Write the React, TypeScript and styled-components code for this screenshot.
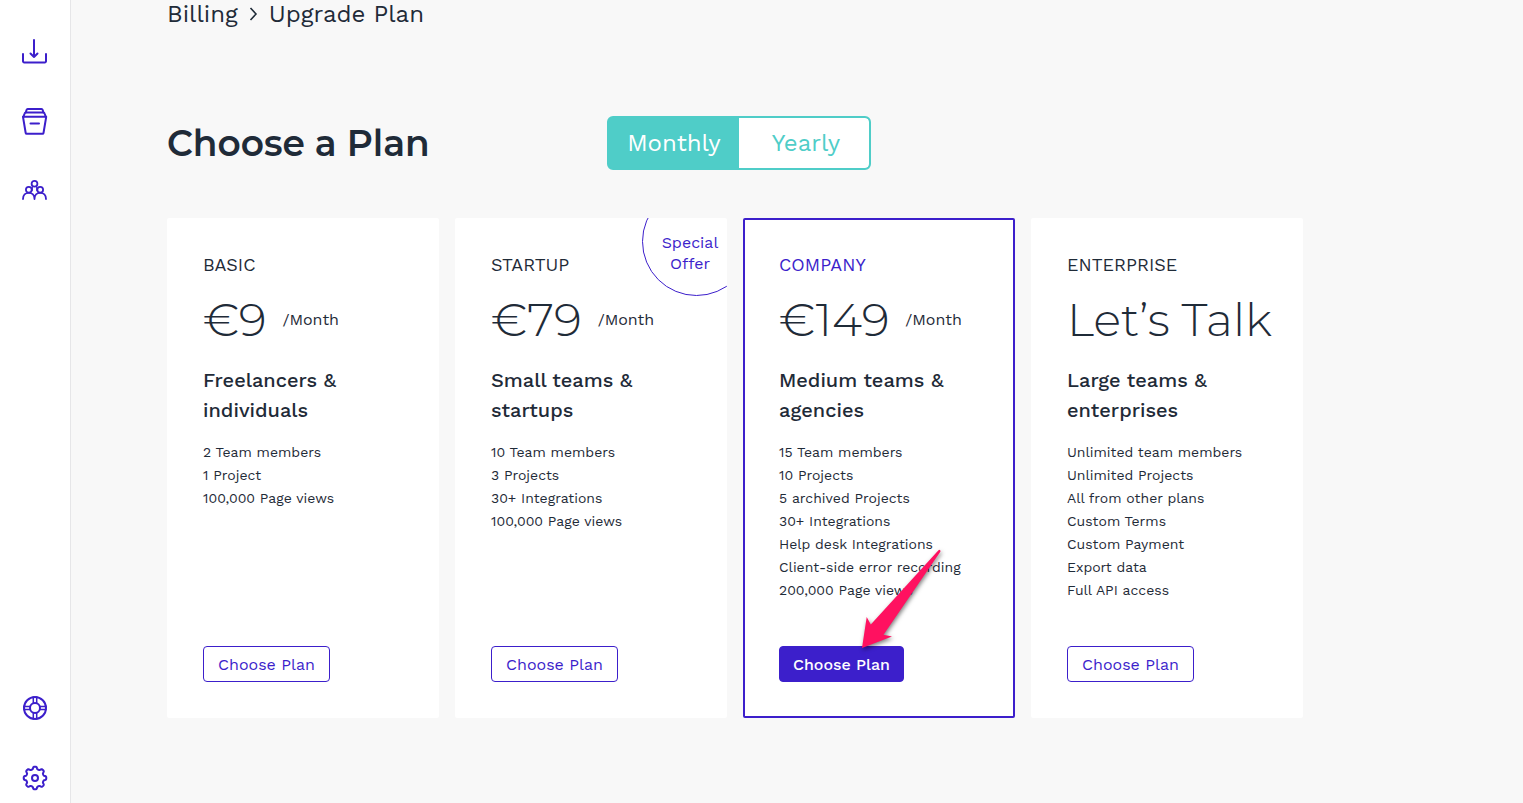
import React from "react";
import styled, { createGlobalStyle, css } from "styled-components";

const indigo = "#3c1fcb";
const ink = "#1f2b38";
const teal = "#4fcdc8";

const GlobalStyle = createGlobalStyle`
  *, *::before, *::after { box-sizing: border-box; }
  body {
    margin: 0;
    background: #f8f8f8;
    color: ${ink};
    font-family: "Work Sans", Inter, "Noto Sans", sans-serif;
    font-size: 14px;
  }
  button { font: inherit; cursor: pointer; }
  h1, h2, p, ul, ol { margin: 0; padding: 0; }
  ul, ol { list-style: none; }
`;

const Shell = styled.div`
  display: flex;
  min-height: 100vh;
`;

const Sidebar = styled.nav`
  position: sticky;
  top: 0;
  display: flex;
  flex: 0 0 71px;
  flex-direction: column;
  justify-content: space-between;
  height: 100vh;
  padding: 31px 0 5px;
  background: #fff;
  border-right: 1px solid #e6e6e8;
`;

const NavGroup = styled.div`
  display: flex;
  flex-direction: column;
  align-items: center;
  gap: 30px;
`;

const NavLink = styled.a`
  display: flex;
  align-items: center;
  justify-content: center;
  width: 40px;
  height: 40px;
  color: ${indigo};
`;

const IconSvg = styled.svg`
  display: block;
  width: 28px;
  height: 28px;
  fill: none;
  stroke: currentColor;
  stroke-width: 2;
  stroke-linecap: round;
  stroke-linejoin: round;
`;

const Main = styled.main`
  flex: 1;
  min-width: 0;
  padding: 0 96px 48px;
`;

const Content = styled.div`
  max-width: 1136px;
`;

const Breadcrumb = styled.ol`
  display: flex;
  align-items: center;
  gap: 11px;
  height: 28px;
  font-size: 24px;
  line-height: 28px;
`;

const CrumbLink = styled.a`
  color: inherit;
  text-decoration: none;
`;

const Chevron = styled.svg`
  display: block;
  width: 9px;
  height: 14px;
  fill: none;
  stroke: currentColor;
  stroke-width: 1.6;
`;

const PlanHeader = styled.header`
  display: grid;
  grid-template-columns: 440px auto;
  align-items: center;
  justify-content: start;
  margin: 88px 0 48px;
`;

const Heading = styled.h1`
  font-family: Montserrat, Inter, sans-serif;
  font-size: 36px;
  font-weight: 600;
  line-height: 54px;
`;

const Toggle = styled.div`
  display: grid;
  grid-template-columns: 1fr 1fr;
  width: 264px;
  height: 54px;
  overflow: hidden;
  background: ${teal};
  border: 2px solid ${teal};
  border-radius: 6px;
`;

const ToggleButton = styled.button<{ $active: boolean }>`
  padding: 0;
  border: 0;
  background: ${(p) => (p.$active ? teal : "#fff")};
  color: ${(p) => (p.$active ? "#fff" : teal)};
  font-size: 24px;

  &:last-child {
    padding-left: 4px;
    border-radius: 0 4px 4px 0;
  }
`;

const PlanGrid = styled.div`
  display: grid;
  grid-template-columns: repeat(4, minmax(0, 1fr));
  gap: 16px;
`;

const Card = styled.section<{ $featured?: boolean }>`
  position: relative;
  display: flex;
  flex-direction: column;
  align-items: flex-start;
  min-height: 500px;
  padding: 34px 0 34px 34px;
  background: #fff;
  border: 2px solid ${(p) => (p.$featured ? indigo : "#fff")};
  border-radius: 2px;
`;

const PlanName = styled.h2<{ $featured?: boolean }>`
  color: ${(p) => (p.$featured ? indigo : ink)};
  font-size: 18px;
  font-weight: 400;
  line-height: 22px;
  text-transform: uppercase;
`;

const PriceRow = styled.div`
  display: flex;
  align-items: center;
  gap: 16px;
  margin-top: 14px;
  white-space: nowrap;
`;

const Price = styled.span`
  font-family: Montserrat, Inter, sans-serif;
  font-size: 46px;
  font-weight: 300;
  line-height: 60px;
`;

const Period = styled.span`
  font-size: 16px;
  line-height: 20px;
`;

const Audience = styled.p`
  max-width: 180px;
  margin-top: 15px;
  font-size: 20px;
  font-weight: 500;
  line-height: 30px;
`;

const Features = styled.ul`
  margin-top: 16px;
  font-size: 14px;
  line-height: 23px;
  white-space: nowrap;
`;

const CardAction = styled.div`
  position: relative;
  margin-top: auto;
`;

const ChooseButton = styled.button<{ $featured?: boolean }>`
  display: block;
  width: 127px;
  height: 36px;
  padding: 0;
  border: 1px solid ${indigo};
  border-radius: 4px;
  background: #fff;
  color: ${indigo};
  font-size: 16px;
  ${(p) =>
    p.$featured &&
    css`
      width: 125px;
      background: ${indigo};
      color: #fff;
      font-weight: 500;
    `}
`;

const OfferClip = styled.div`
  position: absolute;
  inset: -2px;
  overflow: hidden;
  pointer-events: none;
`;

const Offer = styled.div`
  position: absolute;
  top: -31px;
  right: -24px;
  width: 109px;
  height: 109px;
  padding: 44px 13px 0 0;
  border: 1px solid ${indigo};
  border-radius: 50%;
  color: ${indigo};
  font-size: 16px;
  line-height: 21px;
  text-align: center;
`;

const Pointer = styled.svg`
  position: absolute;
  left: 76px;
  bottom: 24px;
  width: 96px;
  height: 114px;
  overflow: visible;
  pointer-events: none;
  filter: drop-shadow(1px 2px 2px rgba(0, 0, 0, 0.5));
`;

const gearPath = (() => {
  const steps = 160;
  const points = Array.from({ length: steps }, (_, i) => {
    const angle = (i / steps) * Math.PI * 2;
    const radius = 10.1 + 1.2 * Math.tanh(2.2 * Math.cos(8 * angle));
    return `${(14 + radius * Math.cos(angle)).toFixed(2)} ${(14 + radius * Math.sin(angle)).toFixed(2)}`;
  });
  return `M${points.join("L")}Z`;
})();

const DownloadIcon = () => (
  <IconSvg viewBox="0 0 28 28" aria-hidden="true">
    <path d="M2 17v7.2a1.2 1.2 0 0 0 1.2 1.2h20.6a1.2 1.2 0 0 0 1.2-1.2V17" />
    <path d="M13 3v17M9.5 16.5 13 20l3.5-3.5" />
  </IconSvg>
);

const ArchiveIcon = () => (
  <IconSvg viewBox="0 0 28 28" aria-hidden="true">
    <path d="M4.8 5.6 5.5 3c.2-.6.6-1 1.200-1h13.800c.6 0 1 .4 1.200 1l.7 2.600" />
    <path d="M2.400 9.800 3.600 6.500c.2-.6.600-.9 1.200-.9h17.600c.600 0 1 .3 1.200.9l1.200 3.300" />
    <path d="M2 9.800h23.200L22.500 26a1 1 0 0 1-1 .8H5.700a1 1 0 0 1-1-.8Z" />
    <path d="M9.500 16.500h8.500" />
  </IconSvg>
);

const TeamIcon = () => (
  <IconSvg viewBox="0 0 28 28" aria-hidden="true">
    <g strokeWidth="1.8">
      <circle cx="13.500" cy="6.800" r="2.900" />
      <circle cx="7.800" cy="12.800" r="2.900" />
      <circle cx="19.200" cy="12.800" r="2.900" />
      <path d="M2 22c0-3.800 2.400-6.200 5.800-6.200s5.700 2.400 5.700 6.200c0-3.800 2.300-6.200 5.700-6.200S25 18.200 25 22" />
      <path strokeWidth="1.200" d="M11.300 9.800v3.500M15.700 9.800v3.500" />
    </g>
  </IconSvg>
);

const HelpIcon = () => (
  <IconSvg viewBox="0 0 28 28" aria-hidden="true">
    <circle cx="14" cy="14" r="11" />
    <circle cx="14" cy="14" r="5" />
    <path
      strokeWidth="1.500"
      d="M12.300 3v6.200M15.700 3v6.200M12.300 18.800V25M15.700 18.800V25M3 12.600h6M3 15.400h6M19 12.600h6M19 15.400h6"
    />
  </IconSvg>
);

const SettingsIcon = () => (
  <IconSvg viewBox="0 0 28 28" aria-hidden="true">
    <path d={gearPath} />
    <circle cx="14" cy="14" r="3" />
  </IconSvg>
);

interface Plan {
  name: string;
  price: string;
  period?: string;
  audience: string;
  features: string[];
  featured?: boolean;
  offer?: boolean;
}

const plans: Plan[] = [
  {
    name: "Basic",
    price: "€9",
    period: "/Month",
    audience: "Freelancers & individuals",
    features: ["2 Team members", "1 Project", "100,000 Page views"],
  },
  {
    name: "Startup",
    price: "€79",
    period: "/Month",
    audience: "Small teams & startups",
    features: ["10 Team members", "3 Projects", "30+ Integrations", "100,000 Page views"],
    offer: true,
  },
  {
    name: "Company",
    price: "€149",
    period: "/Month",
    audience: "Medium teams & agencies",
    features: [
      "15 Team members",
      "10 Projects",
      "5 archived Projects",
      "30+ Integrations",
      "Help desk Integrations",
      "Client-side error recording",
      "200,000 Page views",
    ],
    featured: true,
  },
  {
    name: "Enterprise",
    price: "Let’s Talk",
    audience: "Large teams & enterprises",
    features: [
      "Unlimited team members",
      "Unlimited Projects",
      "All from other plans",
      "Custom Terms",
      "Custom Payment",
      "Export data",
      "Full API access",
    ],
  },
];

const PlanCard = ({ plan }: { plan: Plan }) => (
  <Card $featured={plan.featured}>
    {plan.offer && (
      <OfferClip>
        <Offer>
          Special
          <br />
          Offer
        </Offer>
      </OfferClip>
    )}
    <PlanName $featured={plan.featured}>{plan.name}</PlanName>
    <PriceRow>
      <Price>{plan.price}</Price>
      {plan.period && <Period>{plan.period}</Period>}
    </PriceRow>
    <Audience>{plan.audience}</Audience>
    <Features>
      {plan.features.map((feature) => (
        <li key={feature}>{feature}</li>
      ))}
    </Features>
    <CardAction>
      <ChooseButton type="button" $featured={plan.featured}>
        Choose Plan
      </ChooseButton>
      {plan.featured && (
        <Pointer viewBox="0 0 96 114" aria-hidden="true">
          <path
            fill="#ff1160"
            d="M7 104 11.700 73 15.800 80.500 83.500 6.200Q85.500 5 85.500 7.500L28.500 90.800 37 92.500Z"
          />
        </Pointer>
      )}
    </CardAction>
  </Card>
);

export default function App() {
  const [billing, setBilling] = React.useState("Monthly");
  return (
    <>
      <GlobalStyle />
      <Shell>
        <Sidebar aria-label="Main">
          <NavGroup>
            <NavLink href="#inbox" aria-label="Inbox"><DownloadIcon /></NavLink>
            <NavLink href="#archive" aria-label="Archive"><ArchiveIcon /></NavLink>
            <NavLink href="#team" aria-label="Team"><TeamIcon /></NavLink>
          </NavGroup>
          <NavGroup>
            <NavLink href="#help" aria-label="Help"><HelpIcon /></NavLink>
            <NavLink href="#settings" aria-label="Settings"><SettingsIcon /></NavLink>
          </NavGroup>
        </Sidebar>
        <Main>
          <Content>
            <Breadcrumb>
              <li><CrumbLink href="#billing">Billing</CrumbLink></li>
              <li>
                <Chevron viewBox="0 0 9 14" aria-hidden="true">
                  <path d="m1.500 1 5.500 6-5.500 6" />
                </Chevron>
              </li>
              <li>Upgrade Plan</li>
            </Breadcrumb>
            <PlanHeader>
              <Heading>Choose a Plan</Heading>
              <Toggle role="group" aria-label="Billing period">
                {["Monthly", "Yearly"].map((option) => (
                  <ToggleButton
                    key={option}
                    type="button"
                    $active={billing === option}
                    aria-pressed={billing === option}
                    onClick={() => setBilling(option)}
                  >
                    {option}
                  </ToggleButton>
                ))}
              </Toggle>
            </PlanHeader>
            <PlanGrid>
              {plans.map((plan) => (
                <PlanCard key={plan.name} plan={plan} />
              ))}
            </PlanGrid>
          </Content>
        </Main>
      </Shell>
    </>
  );
}
